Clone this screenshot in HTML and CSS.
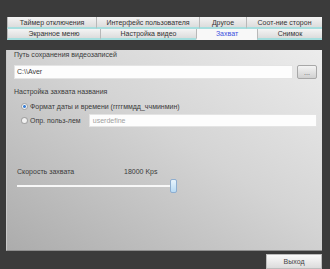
FILE: index.html
```html
<!DOCTYPE html>
<html lang="ru">
<head>
    <meta charset="UTF-8">
    <title>Захват</title>
    <link rel="stylesheet" href="styles.css">
</head>
<body>
    <div class="window">
        <!-- Tabs -->
        <div class="tabs">
            <div class="tab-row row-top">
                <div class="tab w89">Таймер отключения</div>
                <div class="tab w103">Интерфейс пользователя</div>
                <div class="tab w47">Другое</div>
                <div class="tab w76">Соот-ние сторон</div>
            </div>
            <div class="tab-row row-bottom">
                <div class="tab w93">Экранное меню</div>
                <div class="tab w96">Настройка видео</div>
                <div class="tab w61 active">Захват</div>
                <div class="tab w65">Снимок</div>
            </div>
        </div>

        <!-- Capture panel -->
        <div class="panel">
            <div class="label first">Путь сохранения видеозаписей</div>
            <div class="path-row">
                <div class="field path-field">C:\\Aver</div>
                <button class="browse-btn">...</button>
            </div>

            <div class="label second">Настройка захвата названия</div>
            <div class="radio-row first-radio">
                <span class="radio checked"></span>
                <span>Формат даты и времени (ггггммдд_ччминмин)</span>
            </div>
            <div class="radio-row second-radio">
                <span class="radio"></span>
                <span class="radio-text">Опр. польз-лем</span>
                <div class="field user-field">userdefine</div>
            </div>

            <div class="speed-row">
                <span class="speed-label">Скорость захвата</span>
                <span>18000 Kps</span>
            </div>
            <div class="slider">
                <div class="track"></div>
                <div class="thumb"></div>
            </div>
        </div>

        <div class="footer">
            <button class="exit-btn">Выход</button>
        </div>
    </div>
</body>
</html>
```

FILE: styles.css
```css
body {
    margin: 0;
    padding: 0;
    background-color: #3b3b3b;
    font-family: "Liberation Sans", Arial, sans-serif;
    font-size: 7px;
    color: #3a3a3a;
}

.window {
    width: 330px;
    height: 269px;
    box-sizing: border-box;
    padding: 17px 8px 0 6px;
}

/* Tabs */
.tabs {
    margin-left: 1px;
}

.tab-row {
    display: flex;
}

.row-top .tab {
    height: 12px;
    line-height: 11px;
}

.row-bottom .tab {
    height: 11px;
    line-height: 10px;
}

.tab {
    box-sizing: border-box;
    text-align: center;
    font-size: 7px;
    color: #333;
    background: linear-gradient(#f4f4f4, #dcdcdc);
    border-left: 1px solid #b8b8b8;
    border-bottom: 2px solid #a6dede;
    white-space: nowrap;
    overflow: hidden;
}

.tab.active {
    background: #f8f8f8;
    color: #3b4fe0;
    border-bottom-color: #f8f8f8;
}

.w89 { width: 89px; }
.w103 { width: 103px; }
.w47 { width: 47px; }
.w76 { width: 76px; }
.w93 { width: 93px; }
.w96 { width: 96px; }
.w61 { width: 61px; }
.w65 { width: 65px; }

/* Panel */
.panel {
    height: 201px;
    box-sizing: border-box;
    padding: 0 5px 0 7px;
    background: linear-gradient(to top right, #acacac, #d4d4d4 55%, #ececec);
    border-left: 1px solid #c8c8c8;
    border-bottom: 1px solid #8e8e8e;
}

.label {
    line-height: 10px;
}

.label.first {
    margin-top: 10px;
}

.label.second {
    margin-top: 8px;
}

.path-row {
    display: flex;
    margin-top: 5px;
}

.field {
    box-sizing: border-box;
    background: #fdfdfd;
    border: 1px solid #e4e4e4;
    padding-left: 2px;
    line-height: 12px;
}

.path-field {
    width: 280px;
    height: 14px;
}

.browse-btn {
    width: 20px;
    height: 14px;
    margin-left: 4px;
    padding: 0;
    font-size: 7px;
    line-height: 7px;
    color: #555;
    border: 1px solid #a8a8a8;
    border-radius: 2px;
    background: linear-gradient(#f4f4f4, #d0d0d0);
}

.radio-row {
    display: flex;
    align-items: center;
    padding-left: 7px;
}

.first-radio {
    margin-top: 3px;
    height: 12px;
}

.second-radio {
    margin-top: 2px;
    height: 13px;
}

.radio {
    width: 7px;
    height: 7px;
    box-sizing: border-box;
    border-radius: 50%;
    border: 1px solid #a4a4a4;
    background: #f2f2f2;
    margin-right: 2px;
}

.radio.checked {
    background: radial-gradient(#3a7fd4 35%, #f2f2f2 45%);
}

.radio-text {
    width: 59px;
}

.user-field {
    width: 229px;
    height: 13px;
    padding-left: 3px;
    color: #a0a0a0;
}

.speed-row {
    display: flex;
    margin-top: 40px;
    padding-left: 3px;
    line-height: 10px;
}

.speed-label {
    width: 107px;
}

.slider {
    position: relative;
    width: 163px;
    height: 14px;
    margin-top: 2px;
    margin-left: 3px;
}

.track {
    position: absolute;
    left: 0;
    right: 7px;
    top: 6px;
    height: 2px;
    background: #f8f8f8;
}

.thumb {
    position: absolute;
    left: 153px;
    top: 0;
    width: 7px;
    height: 14px;
    box-sizing: border-box;
    border: 1px solid #8eaed0;
    border-radius: 2px;
    background: linear-gradient(#e8f4fc, #b8daf4);
}

/* Footer */
.footer {
    display: flex;
    justify-content: flex-end;
    padding-top: 3px;
}

.exit-btn {
    width: 56px;
    height: 15px;
    padding: 0;
    font-family: "Liberation Sans", Arial, sans-serif;
    font-size: 7px;
    color: #444;
    border: 1px solid #bdbdbd;
    background: linear-gradient(#fafafa, #dcdcdc);
}
```
